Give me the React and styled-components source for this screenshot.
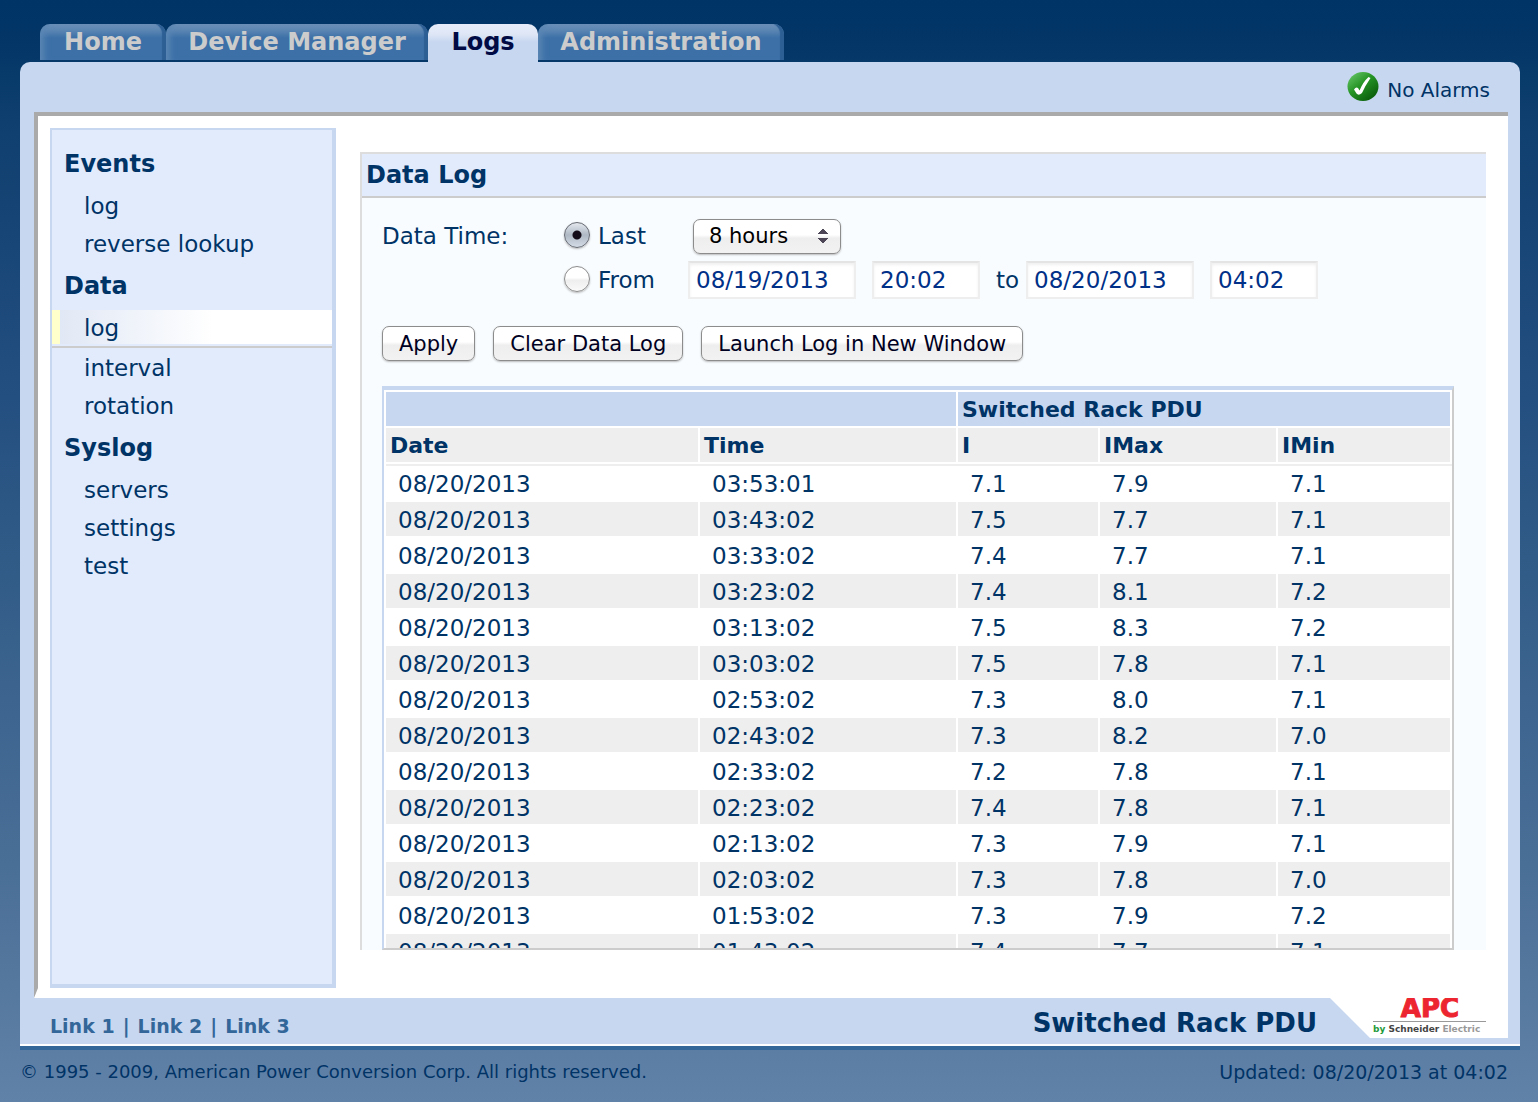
import { useState } from 'react';
import styled, { createGlobalStyle } from 'styled-components';

const navy = '#003366';
const frameBlue = '#c7d7f0';
const paleBlue = '#e1ebfc';
const font = "'DejaVu Sans', Verdana, sans-serif";

const tabs = [
  { name: 'Home', width: 126 },
  { name: 'Device Manager', width: 262 },
  { name: 'Logs', width: 110 },
  { name: 'Administration', width: 246 },
];

const menu = [
  { title: 'Events', items: ['log', 'reverse lookup'] },
  { title: 'Data', items: ['log', 'interval', 'rotation'] },
  { title: 'Syslog', items: ['servers', 'settings', 'test'] },
];

const columns = [314, 258, 142, 178, 174];

const rows = [
  ['08/20/2013', '03:53:01', '7.1', '7.9', '7.1'],
  ['08/20/2013', '03:43:02', '7.5', '7.7', '7.1'],
  ['08/20/2013', '03:33:02', '7.4', '7.7', '7.1'],
  ['08/20/2013', '03:23:02', '7.4', '8.1', '7.2'],
  ['08/20/2013', '03:13:02', '7.5', '8.3', '7.2'],
  ['08/20/2013', '03:03:02', '7.5', '7.8', '7.1'],
  ['08/20/2013', '02:53:02', '7.3', '8.0', '7.1'],
  ['08/20/2013', '02:43:02', '7.3', '8.2', '7.0'],
  ['08/20/2013', '02:33:02', '7.2', '7.8', '7.1'],
  ['08/20/2013', '02:23:02', '7.4', '7.8', '7.1'],
  ['08/20/2013', '02:13:02', '7.3', '7.9', '7.1'],
  ['08/20/2013', '02:03:02', '7.3', '7.8', '7.0'],
  ['08/20/2013', '01:53:02', '7.3', '7.9', '7.2'],
  ['08/20/2013', '01:43:02', '7.4', '7.7', '7.1'],
];

function App() {
  const [range, setRange] = useState('last');
  const [hours, setHours] = useState('8 hours');
  const [active, setActive] = useState('Data/log');

  return (
    <Page>
      <GlobalStyle />
      <Tabs>
        {tabs.map((tab) => (
          <Tab
            key={tab.name}
            href='#'
            $width={tab.width}
            $active={tab.name === 'Logs'}
          >
            {tab.name}
          </Tab>
        ))}
      </Tabs>
      <Frame>
        <Status>
          <CheckIcon />
          <StatusText>No Alarms</StatusText>
        </Status>
        <Content>
          <Sidebar>
            {menu.map((group) => (
              <MenuGroup key={group.title}>
                <MenuTitle>{group.title}</MenuTitle>
                {group.items.map((item) => {
                  const id = `${group.title}/${item}`;
                  return (
                    <MenuItem
                      key={id}
                      href='#'
                      $active={id === active}
                      onClick={() => setActive(id)}
                    >
                      {item}
                    </MenuItem>
                  );
                })}
              </MenuGroup>
            ))}
          </Sidebar>
          <Panel>
            <PanelTitle>Data Log</PanelTitle>
            <PanelBody>
              <TimeForm>
                <span>Data Time:</span>
                <RadioLabel>
                  <Radio
                    type='radio'
                    name='range'
                    checked={range === 'last'}
                    onChange={() => setRange('last')}
                  />
                  Last
                </RadioLabel>
                <Fields>
                  <Select
                    aria-label='Last'
                    value={hours}
                    onChange={(e) => setHours(e.target.value)}
                  >
                    <option>8 hours</option>
                    <option>12 hours</option>
                    <option>1 day</option>
                  </Select>
                </Fields>
                <span />
                <RadioLabel>
                  <Radio
                    type='radio'
                    name='range'
                    checked={range === 'from'}
                    onChange={() => setRange('from')}
                  />
                  From
                </RadioLabel>
                <Fields>
                  <Input $width={168} aria-label='From date' defaultValue='08/19/2013' />
                  <Input $width={108} aria-label='From time' defaultValue='20:02' />
                  <ToLabel>
                    to
                    <Input $width={168} defaultValue='08/20/2013' />
                  </ToLabel>
                  <Input $width={108} aria-label='To time' defaultValue='04:02' />
                </Fields>
              </TimeForm>
              <Buttons>
                <Button type='button'>Apply</Button>
                <Button type='button'>Clear Data Log</Button>
                <Button type='button'>Launch Log in New Window</Button>
              </Buttons>
              <TableBox>
                <Table>
                  <colgroup>
                    {columns.map((width) => (
                      <Col key={width} $width={width} />
                    ))}
                  </colgroup>
                  <thead>
                    <tr>
                      <GroupCell colSpan={2} />
                      <GroupCell colSpan={3}>Switched Rack PDU</GroupCell>
                    </tr>
                    <tr>
                      <HeadCell>Date</HeadCell>
                      <HeadCell>Time</HeadCell>
                      <HeadCell>I</HeadCell>
                      <HeadCell>IMax</HeadCell>
                      <HeadCell>IMin</HeadCell>
                    </tr>
                    <tr>
                      <Divider colSpan={5} />
                    </tr>
                  </thead>
                  <tbody>
                    {rows.map((row) => (
                      <Row key={row[1]}>
                        {row.map((value, i) => (
                          <Cell key={i}>{value}</Cell>
                        ))}
                      </Row>
                    ))}
                  </tbody>
                </Table>
              </TableBox>
            </PanelBody>
          </Panel>
        </Content>
        <BottomBar>
          <Links>
            <a href='#'>Link 1</a>
            <span>|</span>
            <a href='#'>Link 2</a>
            <span>|</span>
            <a href='#'>Link 3</a>
          </Links>
          <DeviceName>Switched Rack PDU</DeviceName>
          <LogoBox>
            <Logo />
          </LogoBox>
        </BottomBar>
      </Frame>
      <Footer>
        <span>© 1995 - 2009, American Power Conversion Corp. All rights reserved.</span>
        <Updated>Updated: 08/20/2013 at 04:02</Updated>
      </Footer>
    </Page>
  );
}

function CheckIcon() {
  return (
    <svg width='32' height='32' viewBox='0 0 32 32' aria-hidden='true'>
      <defs>
        <linearGradient id='ball' x1='0.1' y1='0.1' x2='0.8' y2='0.9'>
          <stop offset='0' stopColor='#5fc05f' />
          <stop offset='0.45' stopColor='#259425' />
          <stop offset='1' stopColor='#0b5f0b' />
        </linearGradient>
      </defs>
      <ellipse cx='16' cy='15.500' rx='15.500' ry='14.500' fill='url(#ball)' />
      <path
        d='M7 18.500 Q9 15.500 11 17 L12.500 19.500 Q16 11 21.500 6 L23.500 7 Q18 15 15 22 Q11.500 25 9.500 22.500 Z'
        fill='#fff'
      />
    </svg>
  );
}

function Logo() {
  return (
    <svg width='122' height='40' viewBox='0 0 122 40' role='img' aria-label='APC by Schneider Electric'>
      <LogoName x='58' y='19' textAnchor='middle'>APC</LogoName>
      <rect x='1' y='23' width='113' height='1' fill='#999' />
      <LogoTag x='1' y='34'>
        <tspan fill='#1f9a3c'>by</tspan> Schneider <tspan fill='#999'>Electric</tspan>
      </LogoTag>
    </svg>
  );
}

const GlobalStyle = createGlobalStyle`
  * {
    box-sizing: border-box;
  }
  body {
    margin: 0;
    font-family: ${font};
    color: ${navy};
  }
`;

const Page = styled.div`
  display: flex;
  flex-direction: column;
  height: 100vh;
  padding: 24px 18px 0 20px;
  background: linear-gradient(
    #003366 0%,
    #053868 5%,
    #10406f 12%,
    #214d7f 34%,
    #2d5885 47%,
    #4f739a 84%,
    #6182a8 100%
  );
`;

const Tabs = styled.nav`
  display: flex;
  flex: none;
  height: 38px;
  padding-left: 20px;
`;

const Tab = styled.a`
  width: ${(props) => props.$width}px;
  height: ${(props) => (props.$active ? 38 : 36)}px;
  border-radius: 10px 10px 0 0;
  background: ${(props) =>
    props.$active
      ? `linear-gradient(#e6ecf9 0, #dfe7f6 10px, ${frameBlue} 18px)`
      : 'linear-gradient(#6c90b8 0, #5c86b3 6px, #3c70a7 14px)'};
  box-shadow: ${(props) =>
    props.$active
      ? 'none'
      : 'inset -5px 0 1px -1px #2d5f95, inset 8px 0 6px -4px #5a86b4'};
  color: ${(props) => (props.$active ? '#000a44' : '#cccccc')};
  font-size: 24px;
  font-weight: bold;
  line-height: 36px;
  text-align: center;
  text-decoration: none;
  white-space: nowrap;
`;

const Frame = styled.div`
  display: flex;
  flex: 1;
  flex-direction: column;
  min-height: 0;
  border-bottom: 4px solid #336699;
  border-radius: 10px 10px 0 0;
  background: ${frameBlue};
`;

const Status = styled.div`
  display: flex;
  flex: none;
  align-items: center;
  justify-content: flex-end;
  gap: 8px;
  height: 50px;
  padding-right: 30px;
`;

const StatusText = styled.span`
  padding-top: 6px;
  font-size: 20px;
`;

const Content = styled.div`
  display: flex;
  flex: 1;
  gap: 24px;
  min-height: 0;
  margin: 0 12px 0 14px;
  padding: 12px 22px 0 12px;
  border: solid #aaaaaa;
  border-width: 4px 0 10px 4px;
  border-bottom-color: #ffffff;
  background: #ffffff;
`;

const Sidebar = styled.nav`
  flex: none;
  width: 286px;
  padding-top: 11px;
  border: solid ${frameBlue};
  border-width: 2px 4px 4px 2px;
  background: ${paleBlue};
`;

const MenuGroup = styled.div`
  display: flex;
  flex-direction: column;
`;

const MenuTitle = styled.h2`
  margin: 0 0 1px;
  padding: 1px 0 0 12px;
  font-size: 24px;
  line-height: 44px;
`;

const MenuItem = styled.a`
  margin: 1px 0;
  padding-left: 32px;
  border-bottom: ${(props) => (props.$active ? '2px solid #cccccc' : '0')};
  background: ${(props) =>
    props.$active
      ? 'linear-gradient(90deg, #ffffcc 8px, #e1e8f5 8px, #ffffff 160px) no-repeat 0 0 / 100% 34px'
      : 'none'};
  color: ${navy};
  font-size: 23px;
  line-height: 36px;
  text-decoration: none;
`;

const Panel = styled.main`
  display: flex;
  flex: 1;
  flex-direction: column;
  min-width: 0;
  margin: 24px 0 38px;
  border: solid #dddddd;
  border-width: 2px 0 0 2px;
  background: #f8fcff;
`;

const PanelTitle = styled.h1`
  flex: none;
  margin: 0;
  padding-left: 4px;
  border-bottom: 2px solid #cccccc;
  background: ${paleBlue};
  font-size: 24px;
  line-height: 42px;
`;

const PanelBody = styled.div`
  display: flex;
  flex: 1;
  flex-direction: column;
  min-height: 0;
  padding: 16px 32px 0 20px;
`;

const TimeForm = styled.div`
  display: grid;
  grid-template-columns: 182px 124px 1fr;
  grid-auto-rows: 44px;
  align-items: center;
  font-size: 23px;
`;

const RadioLabel = styled.label`
  display: flex;
  align-items: center;
  gap: 8px;
`;

const Radio = styled.input`
  appearance: none;
  width: 26px;
  height: 26px;
  margin: 0 0 3px;
  border: 1px solid #8c8c8c;
  border-radius: 50%;
  background: linear-gradient(#ffffff 45%, #eeeeee 55%, #fafafa);
  box-shadow: 0 1px 2px #bbbbbb;

  &:checked {
    border-color: #666a72;
    background:
      radial-gradient(circle, #140c18 4px, transparent 5px),
      linear-gradient(#e4e8ee, #aeb8c4 50%, #d4dce6);
  }
`;

const Fields = styled.div`
  display: flex;
  align-items: center;
  gap: 16px;
`;

const Select = styled.select`
  appearance: none;
  width: 148px;
  height: 35px;
  margin-left: 5px;
  padding: 0 15px;
  border: 1px solid #8c8c8c;
  border-radius: 7px;
  background:
    conic-gradient(from 140deg at 50% 0, #4c4656 80deg, transparent 80deg) no-repeat right 12px top 8px / 10px 6px,
    conic-gradient(from -40deg at 50% 100%, #4c4656 80deg, transparent 80deg) no-repeat right 12px top 18px / 10px 6px,
    linear-gradient(#ffffff 45%, #eeeeee 55%, #f2f2f2);
  box-shadow: 0 1px 2px #bbbbbb;
  color: #000000;
  font-family: ${font};
  font-size: 21px;
`;

const Input = styled.input`
  width: ${(props) => props.$width}px;
  height: 38px;
  padding: 0 6px;
  border: 2px solid #eeeeee;
  border-top-color: #e4e4e4;
  background: #ffffff;
  box-shadow: inset 0 2px 3px #f0f0f0;
  color: #003087;
  font-family: ${font};
  font-size: 23px;
`;

const ToLabel = styled.label`
  display: flex;
  align-items: center;
  gap: 7px;
`;

const Buttons = styled.div`
  display: flex;
  gap: 18px;
  margin: 24px 0 25px;
`;

const Button = styled.button`
  height: 35px;
  padding: 0 16px;
  border: 1px solid #8c8c8c;
  border-radius: 7px;
  background: linear-gradient(#ffffff 45%, #eeeeee 55%, #f2f2f2);
  box-shadow: 0 1px 2px #bbbbbb;
  color: #000022;
  font-family: ${font};
  font-size: 21px;
`;

const TableBox = styled.div`
  flex: 1;
  min-height: 0;
  overflow: hidden;
  padding: 2px 0 0 2px;
  border: solid #cccccc;
  border-width: 4px 2px 2px;
  border-top-color: ${frameBlue};
  border-left-color: ${frameBlue};
  background: #ffffff;
`;

const Table = styled.table`
  width: 100%;
  table-layout: fixed;
  border-spacing: 0;
  text-align: left;
`;

const Col = styled.col`
  width: ${(props) => props.$width}px;
`;

const HeadCell = styled.th`
  height: 36px;
  padding: 2px 4px 0;
  border: solid #ffffff;
  border-width: 0 2px 2px 0;
  background: #eeeeee;
  background-clip: padding-box;
  font-size: 22px;
  line-height: 32px;
`;

const GroupCell = styled(HeadCell)`
  background-color: ${frameBlue};
`;

const Divider = styled.td`
  height: 2px;
  padding: 0;
  background: #eeeeee;
`;

const Row = styled.tr`
  &:nth-child(even) td {
    background-color: #eeeeee;
  }
`;

const Cell = styled.td`
  height: 36px;
  padding: 2px 12px 0;
  border: solid #ffffff;
  border-width: 0 2px 2px 0;
  font-size: 23px;
  line-height: 32px;
`;

const BottomBar = styled.div`
  display: flex;
  flex: none;
  height: 48px;
  padding: 0 12px 0 30px;
  border-bottom: 2px solid #ffffff;
`;

const Links = styled.div`
  display: flex;
  flex: 1;
  gap: 8px;
  padding-top: 5px;
  color: #336699;
  font-size: 19px;
  font-weight: bold;
  line-height: 46px;

  a {
    color: inherit;
    text-decoration: none;
  }
`;

const DeviceName = styled.strong`
  padding-right: 13px;
  font-size: 26px;
  line-height: 50px;
`;

const LogoBox = styled.div`
  width: 178px;
  height: 40px;
  padding-left: 42px;
  background: #ffffff;
  clip-path: polygon(0 0, 100% 0, 100% 100%, 40px 100%);
`;

const LogoName = styled.text`
  fill: #ec2530;
  stroke: #ec2530;
  stroke-width: 1px;
  font: bold 26px ${font};
`;

const LogoTag = styled.text`
  fill: #444444;
  font: bold 9px ${font};
`;

const Footer = styled.footer`
  display: flex;
  flex: none;
  justify-content: space-between;
  height: 52px;
  padding-right: 12px;
  font-size: 18px;
  line-height: 44px;
`;

const Updated = styled.span`
  font-size: 19px;
`;

export default App;
